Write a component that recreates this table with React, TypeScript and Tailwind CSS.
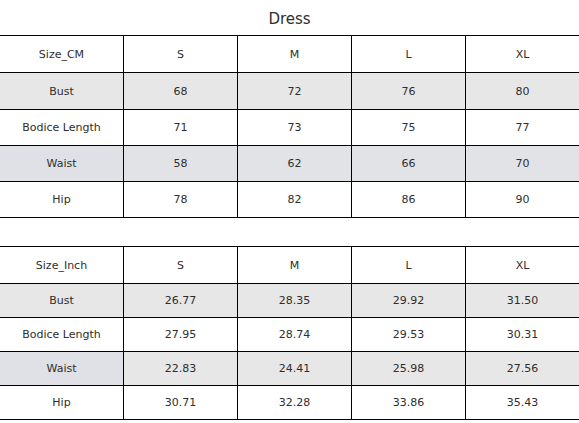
const sizes = ["S", "M", "L", "XL"];

const cmRows = [
  { name: "Bust", values: ["68", "72", "76", "80"], bg: "bg-[#e7e7e7]", firstBg: "bg-[#e7e7e7]" },
  { name: "Bodice Length", values: ["71", "73", "75", "77"], bg: "bg-white", firstBg: "bg-white" },
  { name: "Waist", values: ["58", "62", "66", "70"], bg: "bg-[#e2e3e7]", firstBg: "bg-[#e0e1e6]" },
  { name: "Hip", values: ["78", "82", "86", "90"], bg: "bg-white", firstBg: "bg-white" },
];

const inchRows = [
  { name: "Bust", values: ["26.77", "28.35", "29.92", "31.50"], bg: "bg-[#e7e7e7]", firstBg: "bg-[#e7e7e7]" },
  { name: "Bodice Length", values: ["27.95", "28.74", "29.53", "30.31"], bg: "bg-white", firstBg: "bg-white" },
  { name: "Waist", values: ["22.83", "24.41", "25.98", "27.56"], bg: "bg-[#e7e7e7]", firstBg: "bg-[#e0e1e6]" },
  { name: "Hip", values: ["30.71", "32.28", "33.86", "35.43"], bg: "bg-white", firstBg: "bg-white" },
];

type Row = { name: string; values: string[]; bg: string; firstBg: string };

function TableRow({
  cells,
  height,
  bg,
  firstBg,
}: {
  cells: string[];
  height: string;
  bg: string;
  firstBg: string;
}) {
  return (
    <div className={`grid grid-cols-[123px_114px_114px_114px_114px] border-t border-black ${height}`}>
      {cells.map((c, i) => (
        <div
          key={i}
          className={`flex items-center justify-center pt-[2px] ${i === 0 ? firstBg : bg + " border-l border-black"}`}
        >
          {c}
        </div>
      ))}
    </div>
  );
}

function SizeTable({ label, rows, bodyHeight }: { label: string; rows: Row[]; bodyHeight: string }) {
  return (
    <div className="border-b border-black">
      <TableRow cells={[label, ...sizes]} height="h-[37px]" bg="bg-white" firstBg="bg-white" />
      {rows.map((r, i) => (
        <TableRow
          key={r.name}
          cells={[r.name, ...r.values]}
          height={i === 0 && bodyHeight === "h-[36px]" ? "h-[37px]" : bodyHeight}
          bg={r.bg}
          firstBg={r.firstBg}
        />
      ))}
    </div>
  );
}

export default function App() {
  return (
    <div className="w-[579px] h-[423px] bg-white text-[#2e2e2e] text-[11px] font-['DejaVu_Sans',Verdana,sans-serif] overflow-hidden">
      <div className="h-[35px] flex items-center justify-center text-[15px] pt-[3px]">Dress</div>
      <SizeTable label="Size_CM" rows={cmRows} bodyHeight="h-[36px]" />
      <div className="h-[28px]" />
      <SizeTable label="Size_Inch" rows={inchRows} bodyHeight="h-[34px]" />
    </div>
  );
}
